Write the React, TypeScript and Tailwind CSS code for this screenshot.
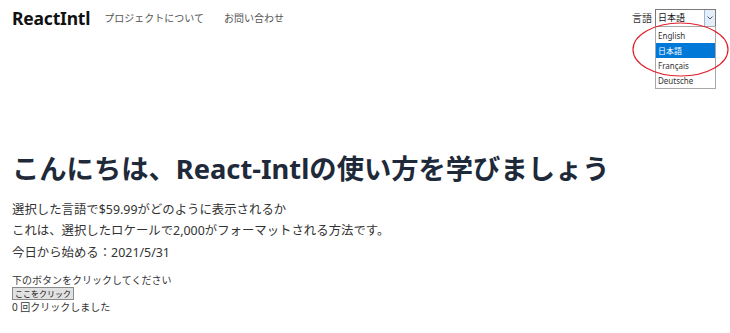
import React from "react";

const font = { fontFamily: '"Noto Sans", "Noto Sans CJK JP", sans-serif' };

export default function App() {
  return (
    <div className="relative w-[730px] h-[333px] bg-white overflow-hidden" style={font}>
      {/* header */}
      <div className="flex items-center h-[36px] pl-[12px] pr-[14px]">
        <div className="text-[17.5px] font-bold text-[#111] tracking-[-0.2px]">ReactIntl</div>
        <div className="ml-[14px] text-[10px] text-[#555]">プロジェクトについて</div>
        <div className="ml-[20px] text-[10px] text-[#555]">お問い合わせ</div>
        <div className="ml-auto flex items-center">
          <span className="text-[10px] text-[#333] mr-[3px]">言語</span>
          <div className="relative">
            <div className="flex w-[61px] h-[18px] border border-[#7a7a7a] bg-white">
              <div className="flex-1 flex items-center pl-[2px] text-[9px] text-[#111]">日本語</div>
              <div className="w-[11px] border-l border-[#9cb6d4] bg-[#e3eefa] flex items-center justify-center">
                <svg width="6" height="4" viewBox="0 0 6 4"><path d="M0.5 0.5 L3 3 L5.5 0.5" fill="none" stroke="#444" strokeWidth="0.9" /></svg>
              </div>
            </div>
            <div className="absolute left-0 top-[17px] w-[61px] border border-[#a8a8a8] bg-white pt-[1px] text-[8px] text-[#333] z-10">
              <div className="h-[15px] flex items-center pl-[2px]">English</div>
              <div className="h-[15px] flex items-center pl-[2px] bg-[#0078d7] text-white">日本語</div>
              <div className="h-[15px] flex items-center pl-[2px]">Français</div>
              <div className="h-[15px] flex items-center pl-[2px]">Deutsche</div>
            </div>
          </div>
        </div>
      </div>

      {/* red annotation ellipse */}
      <svg className="absolute left-[632px] top-[22px] z-20 pointer-events-none" width="98" height="56" viewBox="0 0 98 56">
        <ellipse cx="48.5" cy="27.5" rx="47.5" ry="26.5" fill="none" stroke="#e0202a" strokeWidth="1.2" />
      </svg>

      {/* main */}
      <div className="pl-[12px] pt-[116px]">
        <h1 className="text-[27.3px] font-bold leading-[34px] text-[#1e2939]">こんにちは、React-Intlの使い方を学びましょう</h1>
        <div className="mt-[14px] text-[12.4px] text-[#333]">
          <p className="leading-[20px]">選択した言語で$59.99がどのように表示されるか</p>
          <p className="leading-[20px] mt-[1px]">これは、選択したロケールで2,000がフォーマットされる方法です。</p>
          <p className="leading-[20px] mt-[2px]">今日から始める：2021/5/31</p>
        </div>
        <div className="mt-[11px] text-[10px] text-[#333]">
          <p className="leading-[13px]">下のボタンをクリックしてください</p>
          <button className="block h-[13px] px-[2px] border border-[#8a8a8a] bg-[#e1e1e1] text-[8px] leading-[11px] text-[#111]">ここをクリック</button>
          <p className="leading-[14px]">0 回クリックしました</p>
        </div>
      </div>
    </div>
  );
}
